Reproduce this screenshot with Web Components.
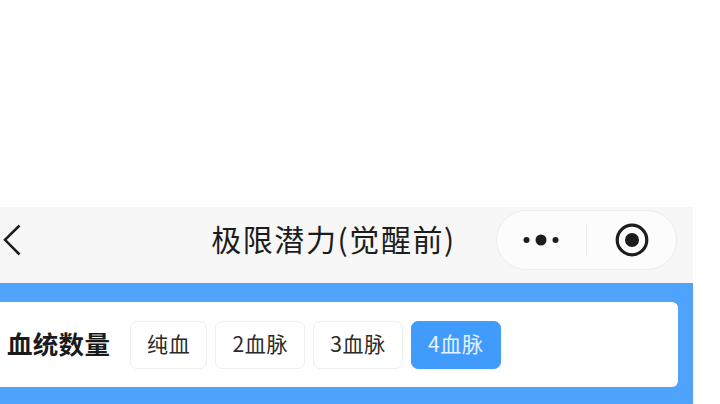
<!DOCTYPE html>
<html lang="zh">
<head>
<meta charset="utf-8">
<style>
    html, body { margin: 0; padding: 0; background: #fff; overflow: hidden; }
    body { width: 720px; height: 404px; font-family: "Noto Sans CJK SC", "Noto Sans", sans-serif; }
</style>
</head>
<body>
<app-page>
    <nav-bar title="极限潜力(觉醒前)"></nav-bar>
    <filter-card label="血统数量">
        <filter-chip>纯血</filter-chip>
        <filter-chip>2血脉</filter-chip>
        <filter-chip>3血脉</filter-chip>
        <filter-chip active>4血脉</filter-chip>
    </filter-card>
</app-page>

<script>
class AppPage extends HTMLElement {
    constructor() {
        super();
        this.attachShadow({ mode: 'open' });
        this.shadowRoot.innerHTML = `
            <style>
                :host { display: block; width: 693px; height: 404px; padding-top: 207px; box-sizing: border-box; }
            </style>
            <slot></slot>
        `;
    }
}

class NavBar extends HTMLElement {
    constructor() {
        super();
        this.attachShadow({ mode: 'open' });
    }

    connectedCallback() {
        this.shadowRoot.innerHTML = `
            <style>
                :host { display: flex; align-items: flex-start; height: 76px; background: #f7f7f7; color: #1c1c1c; }
                .back { flex: none; width: 24px; height: 66px; display: flex; align-items: center; }
                .title { flex: 1; text-align: center; font-size: 30px; letter-spacing: 1.600px; line-height: 63px; padding-left: 147px; white-space: nowrap; box-sizing: border-box; }
                .capsule { flex: none; width: 181px; height: 60px; margin: 3px 16px 0 0; box-sizing: border-box; display: flex; align-items: center; background: #fcfcfc; border: 1px solid #ececec; border-radius: 30px; }
                .cell { flex: 1; display: flex; justify-content: center; align-items: center; }
                .cell + .line + .cell { padding-left: 1px; }
                .line { flex: none; width: 1px; height: 34px; background: #ececec; }
            </style>
            <div class="back">
                <svg width="24" height="40" viewBox="0 0 24 40"><path d="M19.500 5.500 5 19.800 19.500 34.500" fill="none" stroke="#1c1c1c" stroke-width="2.500"/></svg>
            </div>
            <div class="title">${this.getAttribute('title')}</div>
            <div class="capsule">
                <div class="cell">
                    <svg width="40" height="14" viewBox="0 0 40 14" fill="#1c1c1c"><circle cx="5.500" cy="7" r="3"/><circle cx="20" cy="7" r="5.500"/><circle cx="34.500" cy="7" r="3"/></svg>
                </div>
                <div class="line"></div>
                <div class="cell">
                    <svg width="36" height="36" viewBox="0 0 36 36"><circle cx="18" cy="18" r="14.800" fill="none" stroke="#1c1c1c" stroke-width="3.200"/><circle cx="18" cy="18" r="7" fill="#1c1c1c"/></svg>
                </div>
            </div>
        `;
    }
}

class FilterCard extends HTMLElement {
    constructor() {
        super();
        this.attachShadow({ mode: 'open' });
    }

    connectedCallback() {
        this.shadowRoot.innerHTML = `
            <style>
                :host { display: block; height: 121px; padding: 19px 15px 0 0; box-sizing: border-box; background: #4fa3fb; }
                .card { height: 85px; box-sizing: border-box; padding-left: 7px; display: flex; align-items: center; background: #fff; border-radius: 0 6px 6px 0; }
                .label { flex: none; width: 123px; padding-bottom: 5px; font-size: 25.500px; letter-spacing: .3px; font-weight: 700; color: #1a1a1a; white-space: nowrap; }
                .chips { display: flex; gap: 8px; }
            </style>
            <div class="card">
                <div class="label">${this.getAttribute('label')}</div>
                <div class="chips"><slot></slot></div>
            </div>
        `;
    }
}

class FilterChip extends HTMLElement {
    constructor() {
        super();
        this.attachShadow({ mode: 'open' });
        this.shadowRoot.innerHTML = `
            <style>
                :host { display: flex; align-items: center; justify-content: center; height: 48px; padding: 0 16px 3px; box-sizing: border-box; font-size: 21px; letter-spacing: .7px; color: #2a2a2a; background: #fff; border: 1px solid #efefef; border-radius: 7px; white-space: nowrap; }
                :host([active]) { color: #e6f2ff; background: #409bfa; border-color: #409bfa; }
            </style>
            <slot></slot>
        `;
    }
}

customElements.define('app-page', AppPage);
customElements.define('nav-bar', NavBar);
customElements.define('filter-card', FilterCard);
customElements.define('filter-chip', FilterChip);
</script>
</body>
</html>
